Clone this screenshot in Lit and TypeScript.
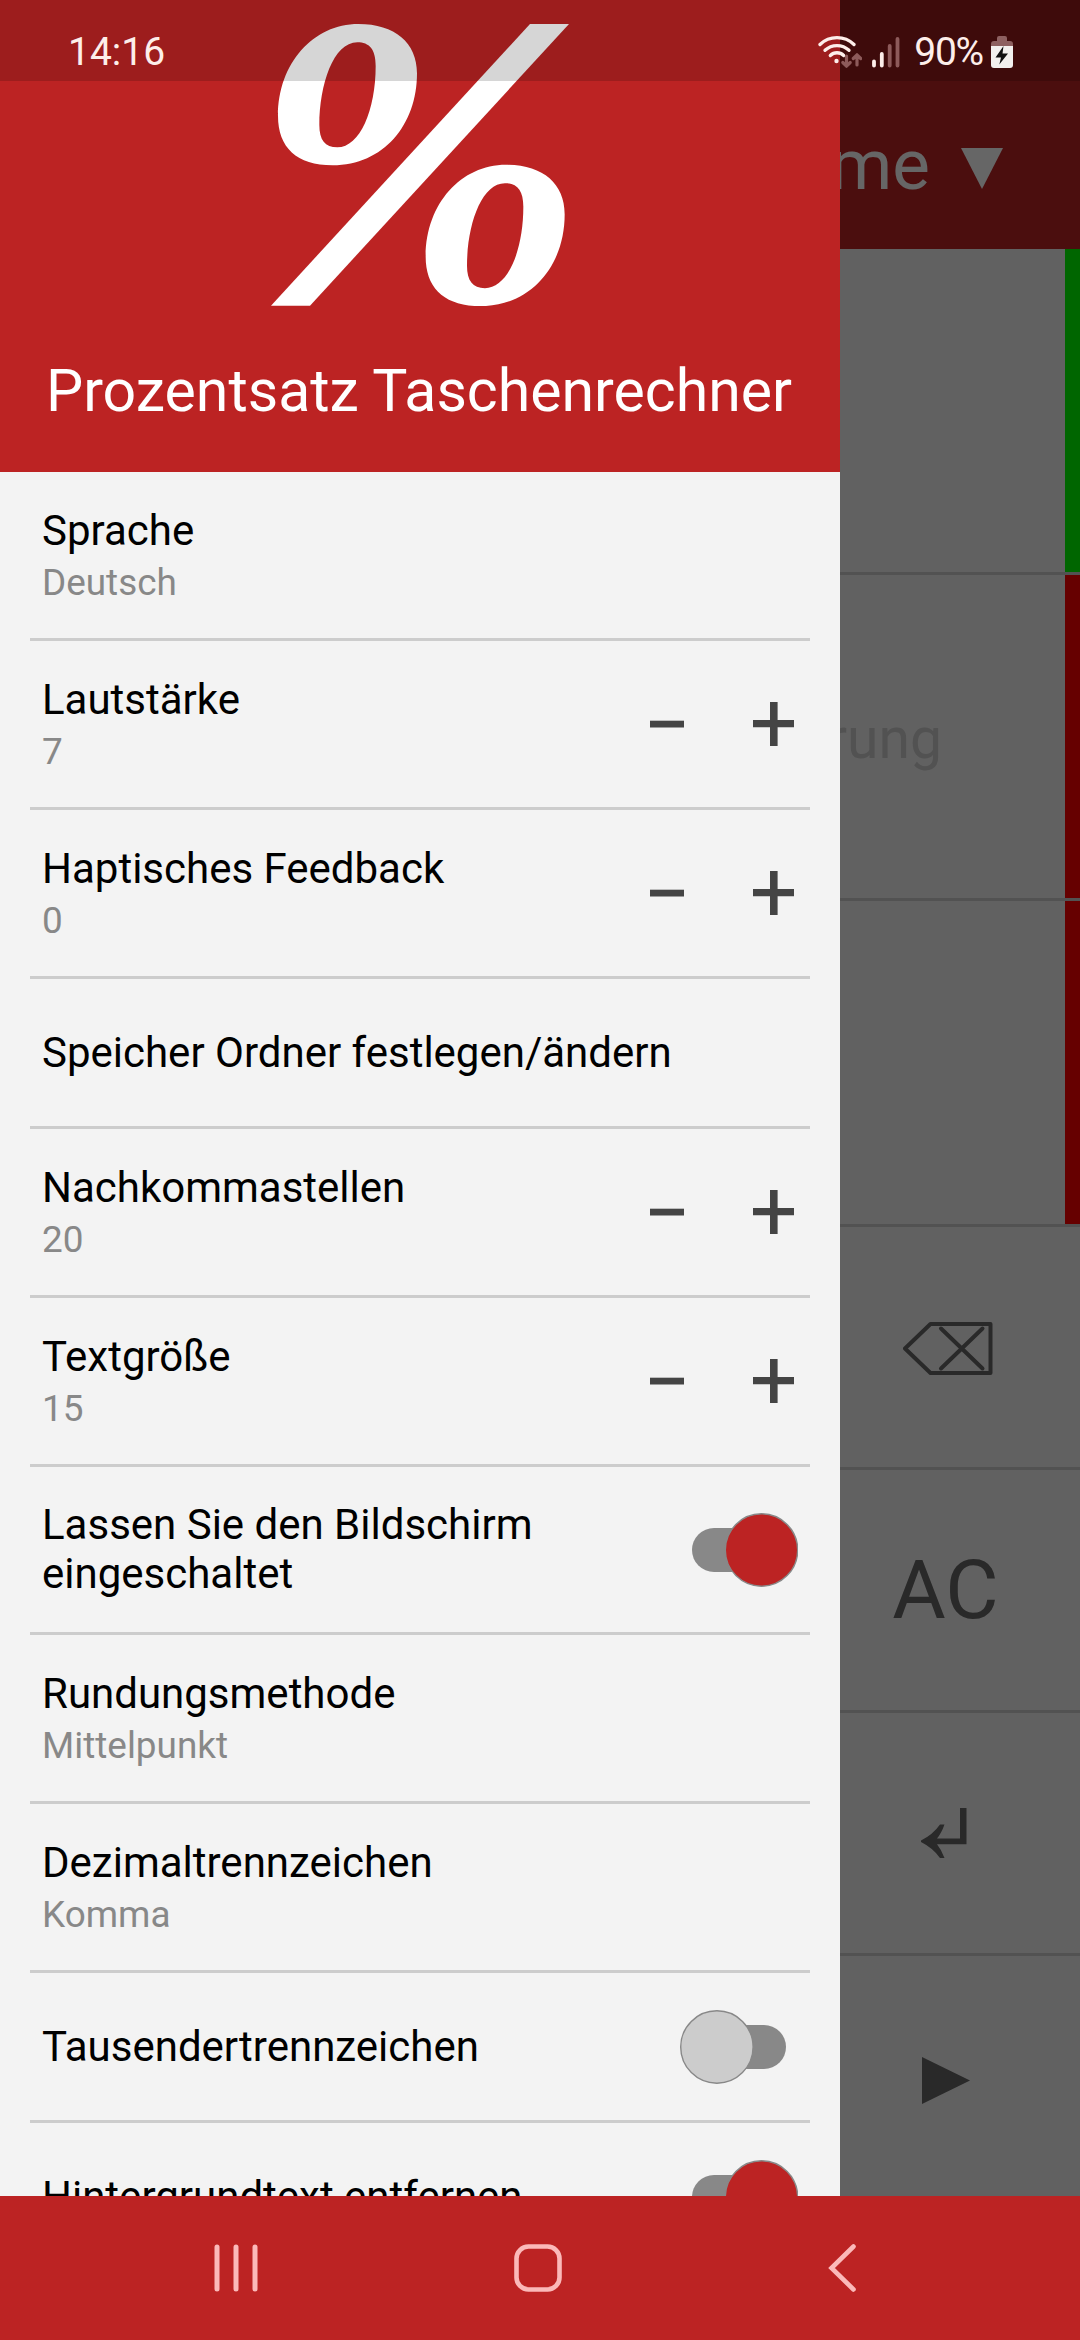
import { LitElement, html, css, svg, nothing } from "lit";
import { customElement, property } from "lit/decorators.js";

type Control = "none" | "stepper" | "on" | "off";

interface Setting {
  label: string;
  value?: string;
  control: Control;
}

const SETTINGS: Setting[] = [
  { label: "Sprache", value: "Deutsch", control: "none" },
  { label: "Lautstärke", value: "7", control: "stepper" },
  { label: "Haptisches Feedback", value: "0", control: "stepper" },
  { label: "Speicher Ordner festlegen/ändern", control: "none" },
  { label: "Nachkommastellen", value: "20", control: "stepper" },
  { label: "Textgröße", value: "15", control: "stepper" },
  { label: "Lassen Sie den Bildschirm eingeschaltet", control: "on" },
  { label: "Rundungsmethode", value: "Mittelpunkt", control: "none" },
  { label: "Dezimaltrennzeichen", value: "Komma", control: "none" },
  { label: "Tausendertrennzeichen", control: "off" },
  { label: "Hintergrundtext entfernen", control: "on" },
];

@customElement("setting-row")
export class SettingRow extends LitElement {
  @property({ attribute: false }) setting!: Setting;

  static styles = css`
    :host {
      display: block;
      padding: 0 30px;
    }
    .row {
      display: flex;
      align-items: center;
      box-sizing: border-box;
      min-height: 150px;
      padding: 34px 12px 33px;
      border-bottom: 3px solid #ccc;
    }
    .text {
      flex: 1;
      min-width: 0;
    }
    .label {
      font-size: 42px;
      line-height: 49px;
      color: #000;
      max-width: 520px;
    }
    .single {
      max-width: none;
    }
    .label:only-child {
      margin: -1px 0 1px;
    }
    .value {
      margin-top: 6px;
      font-size: 36.900px;
      line-height: 44px;
      color: #888;
    }
    .stepper {
      display: flex;
      align-items: center;
      gap: 69px;
      padding-right: 4px;
      margin-bottom: 1px;
    }
    svg {
      display: block;
    }
    .switch {
      display: flex;
      margin: -21px 0 -20px;
    }
    .switch-off {
      padding-right: 12px;
    }
  `;

  private renderControl(control: Control) {
    switch (control) {
      case "stepper":
        return html`<div class="stepper">
          <svg width="34" height="44" viewBox="0 0 34 44">
            <rect y="18.7" width="34" height="6.800" fill="#444" />
          </svg>
          <svg width="41" height="44" viewBox="0 0 41 44">
            <path d="M17 0h7.600v18h16.400v7.300h-16.400v18.700h-7.600v-18.700h-17v-7.300h17z" fill="#444" />
          </svg>
        </div>`;
      case "on":
        return html`<div class="switch">
          <svg width="106" height="74" viewBox="0 0 106 74">
            <rect x="0" y="15" width="94" height="44" rx="22" fill="#888" />
            <circle cx="69.500" cy="37" r="36.200" fill="#bc2323" stroke="#888" stroke-width="1.400" />
          </svg>
        </div>`;
      case "off":
        return html`<div class="switch switch-off">
          <svg width="106" height="74" viewBox="0 0 106 74">
            <rect x="12" y="15" width="94" height="44" rx="22" fill="#888" />
            <circle cx="36.900" cy="37" r="36.200" fill="#ccc" stroke="#888" stroke-width="1.400" />
          </svg>
        </div>`;
      default:
        return nothing;
    }
  }

  render() {
    const { label, value, control } = this.setting;
    return html`<div class="row">
      <div class="text">
        <div class="label ${control === "none" ? "single" : ""}">${label}</div>
        ${value ? html`<div class="value">${value}</div>` : nothing}
      </div>
      ${this.renderControl(control)}
    </div>`;
  }
}

@customElement("status-bar")
export class StatusBar extends LitElement {
  static styles = css`
    :host {
      display: flex;
      align-items: flex-start;
      justify-content: space-between;
      box-sizing: border-box;
      height: 81px;
      padding: 28px 67px 0 68px;
      background: rgba(0, 0, 0, 0.16);
      color: #fdeeea;
      font-size: 39px;
      line-height: 48px;
    }
    .icons {
      display: flex;
      align-items: flex-start;
    }
    .wifi {
      margin: 6px 10px 0 0;
    }
    .signal {
      margin: 9px 14px 0 0;
    }
    .level {
      letter-spacing: -1.200px;
      margin-right: 8px;
    }
    .battery {
      margin-top: 8px;
    }
  `;

  render() {
    return html`
      <span>14:16</span>
      <div class="icons">
        <svg class="wifi" width="44" height="36" viewBox="0 0 44 36">
          <g fill="none" stroke="#fdeeea" stroke-width="3.300" stroke-linecap="round">
            <path d="M2 10.500a24.500 24.500 0 0 1 34 0" />
            <path d="M7 16.300a17.500 17.500 0 0 1 24 0" />
            <path d="M12.300 21.500a9.500 9.500 0 0 1 13.400 0" />
          </g>
          <circle cx="18.500" cy="27" r="2.200" fill="#fdeeea" />
          <g fill="none" stroke="#8d5a5a" stroke-width="3.200" stroke-linecap="round" stroke-linejoin="round">
            <path d="M28.500 22v9.500M24.800 28.500l3.700 3.700l3.700-3.700" />
            <path d="M39 31v-9.500M35.300 24.500l3.700-3.700l3.700 3.700" />
          </g>
        </svg>
        <svg class="signal" width="28" height="31" viewBox="0 0 28 31">
          <g stroke-width="3.800" stroke-linecap="round">
            <path d="M2 24.500v4M9.800 17v11.500" stroke="#fdeeea" />
            <path d="M17.700 9v19.500M25.500 2v26.500" stroke="#8d5a5a" />
          </g>
        </svg>
        <span class="level">90%</span>
        <svg class="battery" width="22" height="33" viewBox="0 0 22 33">
          <path d="M0 11v-3q0-3 3-3h3v-3q0-2 2-2h6q2 0 2 2v3h3q3 0 3 3v3z" fill="#8d6060" />
          <path d="M0 10h22v19q0 3-3 3h-16q-3 0-3-3z" fill="#f2f0ee" />
          <path d="M12.500 10l-8 11.500h5.500l-1.700 7l8.700-11h-5.500l1-7.500z" fill="#111" />
        </svg>
      </div>
    `;
  }
}

@customElement("calculator-view")
export class CalculatorView extends LitElement {
  static styles = css`
    :host {
      display: flex;
      flex-direction: column;
      height: 2196px;
      background: #f3f3f3;
    }
    .toolbar {
      display: flex;
      align-items: center;
      justify-content: flex-end;
      gap: 31px;
      box-sizing: border-box;
      height: 249px;
      padding: 81px 77px 0 0;
      background: #bc2323;
      color: #fff;
      font-size: 71px;
      line-height: 84px;
    }
    .arrow {
      margin-top: 6px;
    }
    .field {
      display: flex;
      align-items: center;
      justify-content: flex-end;
      box-sizing: border-box;
      height: 323px;
      padding: 3px 123px 0 0;
      border-right: 15px solid #f00;
      color: #ccc;
      font-size: 57px;
    }
    .line {
      height: 3px;
      background: #ccc;
    }
    .ready {
      border-right-color: #0f0;
    }
    .keys {
      display: flex;
      flex-direction: column;
      align-items: flex-end;
      flex: 1;
    }
    .keys .line {
      width: 100%;
    }
    .key {
      display: grid;
      place-items: center;
      box-sizing: border-box;
      width: 270px;
      height: 240px;
      font-size: 82px;
      line-height: 95px;
      color: #666;
    }
    .delete {
      padding-left: 5px;
      padding-top: 2px;
    }
    .clear {
      padding-left: 1px;
    }
    .enter {
      padding-right: 3px;
    }
    .next {
      padding-left: 2px;
      padding-top: 8px;
    }
  `;

  render() {
    return html`
      <div class="toolbar">
        <span>Summe</span>
        <svg class="arrow" width="42" height="41" viewBox="0 0 42 41">
          <path d="M0 0h42l-21 41z" fill="#fff" />
        </svg>
      </div>
      <div class="field ready"></div>
      <div class="line"></div>
      <div class="field">Veränderung</div>
      <div class="line"></div>
      <div class="field"></div>
      <div class="keys">
        <div class="line"></div>
        <div class="key delete">
          <svg width="90" height="53" viewBox="0 0 90 53">
            <g fill="none" stroke="#666" stroke-width="4" stroke-linecap="round">
              <path d="M2 26.500l25.500-24.500h60v49h-60z" stroke-linejoin="round" />
              <path d="M38 6.500l41.500 40M79.500 6.500l-41.500 40" />
            </g>
          </svg>
        </div>
        <div class="line"></div>
        <div class="key clear">AC</div>
        <div class="line"></div>
        <div class="key enter">
          <svg width="46" height="50" viewBox="0 0 46 50">
            <path
              d="M39 0h6.500v36.200h-29.500q4.500 5.500 7.500 13.800h-4.500q-7-10-19-16v-1.500q12-6 19-16h4.500q-3 8.500-7.500 14h23z"
              fill="#666"
            />
          </svg>
        </div>
        <div class="line"></div>
        <div class="key next">
          <svg width="48" height="47" viewBox="0 0 48 47"><path d="M0 0l48 23.500l-48 23.500z" fill="#666" /></svg>
        </div>
      </div>
    `;
  }
}

@customElement("app-root")
export class AppRoot extends LitElement {
  static styles = css`
    :host {
      display: block;
      position: relative;
      width: 1080px;
      height: 2340px;
      overflow: hidden;
      font-family: Roboto, "Noto Sans", sans-serif;
      background: #f3f3f3;
    }
    .scrim {
      position: absolute;
      top: 0;
      left: 0;
      width: 1080px;
      height: 2196px;
      background: rgba(0, 0, 0, 0.6);
    }
    .drawer {
      position: absolute;
      top: 0;
      left: 0;
      width: 840px;
      height: 2196px;
      overflow: hidden;
      background: #f3f3f3;
    }
    .header {
      display: flex;
      flex-direction: column;
      align-items: center;
      box-sizing: border-box;
      height: 472px;
      padding-top: 24px;
      background: #bc2323;
      color: #fff;
    }
    .logo {
      display: block;
    }
    .title {
      margin: 50px 2px 0 0;
      font-size: 59px;
      line-height: 70px;
      white-space: nowrap;
    }
    status-bar {
      position: absolute;
      top: 0;
      left: 0;
      width: 1080px;
    }
    .nav {
      display: flex;
      align-items: center;
      box-sizing: border-box;
      height: 144px;
      padding-left: 213px;
      background: #bc2323;
    }
    .home {
      margin-left: 255px;
    }
    .back {
      margin-left: 266px;
    }
  `;

  render() {
    const stroke = "#fbb9b9";
    const ring = svg`<path
      fill-rule="evenodd"
      d="M325 42C435 42 501 98 501 190C501 345 400 466 248 466C140 466 84 412 84 318C84 160 190 42 325 42z
         M322 97C358 97 377 118 377 168C377 300 330 412 262 412C225 412 208 390 208 345C208 225 250 97 322 97z"
    />`;
    return html`
      <calculator-view></calculator-view>
      <div class="scrim"></div>
      <div class="drawer">
        <div class="header">
          <svg class="logo" width="300" height="282" viewBox="60 42 900 846" fill="#fff">
            ${ring}
            <g transform="translate(443 422.5)">${ring}</g>
            <path d="M840 42h117l-777 845h-117z" />
          </svg>
          <div class="title">Prozentsatz Taschenrechner</div>
        </div>
        ${SETTINGS.map((s) => html`<setting-row .setting=${s}></setting-row>`)}
      </div>
      <status-bar></status-bar>
      <div class="nav">
        <svg width="46" height="48" viewBox="0 0 46 48">
          ${[4, 23, 42].map(
            (x) => svg`<path d="M${x} 3v42" stroke=${stroke} stroke-width="5" stroke-linecap="round" />`
          )}
        </svg>
        <svg class="home" width="48" height="48" viewBox="0 0 48 48">
          <rect x="2.500" y="2.500" width="43" height="43" rx="12" fill="none" stroke=${stroke} stroke-width="4.600" />
        </svg>
        <svg class="back" width="30" height="48" viewBox="0 0 30 48">
          <path
            d="M25.500 2.500l-22 21.500l22 21.500"
            fill="none"
            stroke=${stroke}
            stroke-width="4.600"
            stroke-linecap="round"
            stroke-linejoin="miter"
          />
        </svg>
      </div>
    `;
  }
}
